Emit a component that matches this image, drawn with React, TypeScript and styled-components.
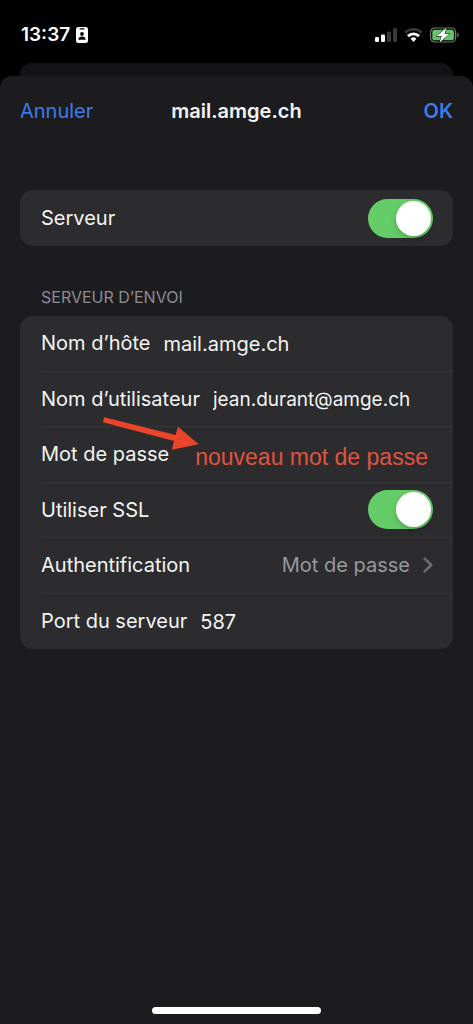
import React, { useState } from "react";
import styled, { createGlobalStyle } from "styled-components";

const GlobalStyle = createGlobalStyle`
  *, *::before, *::after { box-sizing: border-box; }
  body {
    margin: 0;
    background: #000;
    color: #f4f4f5;
    font-family: Inter, "Liberation Sans", sans-serif;
    font-size: 20px;
    line-height: 24px;
  }
  button, input { font: inherit; color: inherit; }
`;

const Screen = styled.div`
  display: flex;
  flex-direction: column;
  min-height: 100vh;
`;

const StatusBar = styled.header`
  display: flex;
  align-items: center;
  justify-content: space-between;
  height: 63px;
  padding: 6px 14px 0 21px;
`;

const StatusGroup = styled.div<{ $gap: number }>`
  display: flex;
  align-items: center;
  gap: ${(p) => p.$gap}px;
`;

const Clock = styled.time`
  font-size: 19px;
  font-weight: 600;
  color: #fff;
`;

const BackSheet = styled.div`
  height: 13px;
  margin: 0 20px;
  border-radius: 12px 12px 0 0;
  background: #131315;
`;

const Sheet = styled.main`
  flex: 1;
  display: flex;
  flex-direction: column;
  padding: 0 20px 10px;
  border-radius: 12px 12px 0 0;
  background: #1c1c1e;
`;

const NavBar = styled.nav`
  display: grid;
  grid-template-columns: 1fr auto 1fr;
  align-items: center;
  height: 70px;
  margin-bottom: 44px;
`;

const Title = styled.h1`
  margin: 0;
  font-size: 20px;
  font-weight: 600;
`;

const NavButton = styled.button<{ $end?: boolean }>`
  justify-self: ${(p) => (p.$end ? "end" : "start")};
  padding: 0;
  border: 0;
  background: none;
  color: #3d7be6;
  font-weight: ${(p) => (p.$end ? 600 : 400)};
`;

const Group = styled.div<{ $height: number }>`
  position: relative;
  display: grid;
  grid-template-columns: minmax(0, 1fr);
  grid-auto-rows: 1fr;
  min-height: ${(p) => p.$height}px;
  padding-left: 21px;
  border-radius: 13px;
  background: #2c2c2e;
`;

const Row = styled.div`
  display: flex;
  align-items: center;
  gap: 13px;
  padding-right: 20px;
  &:not(:last-of-type) { border-bottom: 1px solid #363639; }
`;

const Label = styled.label`
  white-space: nowrap;
`;

const Field = styled.input<{ $small?: boolean }>`
  flex: 1;
  min-width: 0;
  height: 26px;
  padding: 1px 0 0;
  border: 0;
  outline: 0;
  background: none;
  font-size: ${(p) => (p.$small ? 19 : 20)}px;
`;

const NoteField = styled(Field)`
  height: 32px;
  padding: 6px 0 0 13px;
  color: #e0533f;
  font-family: "Liberation Sans", Arial, sans-serif;
  font-size: 23px;
`;

const SectionTitle = styled.h2`
  margin: 41px 0 8px;
  padding-left: 21px;
  color: #8c8c92;
  font-size: 16px;
  font-weight: 400;
  line-height: 21px;
`;

const Switch = styled.input`
  appearance: none;
  flex: none;
  display: flex;
  width: 65px;
  height: 39px;
  margin: 0 0 0 auto;
  padding: 2px;
  border-radius: 20px;
  background: #39393d;
  &:checked { background: #65cd67; justify-content: flex-end; }
  &::before {
    content: "";
    width: 35px;
    height: 35px;
    border-radius: 50%;
    background: #fff;
    box-shadow: 0 3px 6px rgba(0, 0, 0, 0.18);
  }
`;

const Choice = styled.button`
  display: flex;
  flex: 1;
  align-items: center;
  justify-content: flex-end;
  gap: 13px;
  padding: 0;
  border: 0;
  background: none;
  color: #98989f;
`;

const Arrow = styled.svg`
  position: absolute;
  left: 80px;
  top: 99px;
  pointer-events: none;
`;

const HomeIndicator = styled.div`
  width: 169px;
  height: 7px;
  margin: auto auto 0;
  border-radius: 4px;
  background: #fff;
`;

const BadgeIcon = () => (
  <svg width="12" height="16" viewBox="0 0 12 16" aria-hidden="true">
    <rect width="12" height="16" rx="2.5" fill="#fff" />
    <rect x="3.5" y="1.2" width="5" height="1.3" rx=".6" fill="#000" />
    <circle cx="6" cy="6.9" r="1.9" fill="#000" />
    <path d="M2.3 12.8c0-2.1 1.7-3.3 3.7-3.3s3.7 1.2 3.7 3.3z" fill="#000" />
  </svg>
);

const SignalIcon = () => (
  <svg width="22" height="14" viewBox="0 0 22 14" aria-hidden="true">
    <rect x="0" y="9" width="4" height="5" rx="1.2" fill="#fff" />
    <rect x="6" y="6.5" width="4" height="7.5" rx="1.2" fill="#fff" />
    <rect x="12" y="3.5" width="4" height="10.5" rx="1.2" fill="#39393b" />
    <rect x="18" y="0" width="4" height="14" rx="1.2" fill="#39393b" />
  </svg>
);

const WifiIcon = () => (
  <svg width="19" height="14" viewBox="0 0 19 14" aria-hidden="true" fill="none">
    <path d="M1.2 4.7a11.8 11.8 0 0 1 16.6 0" stroke="#39393b" strokeWidth="2.5" />
    <path d="M4 8.1a7.8 7.8 0 0 1 11 0" stroke="#fff" strokeWidth="2.9" />
    <path d="M6.6 10.7a4.2 4.2 0 0 1 5.8 0L9.5 13.9z" fill="#fff" />
  </svg>
);

const BatteryIcon = () => (
  <svg width="29" height="16" viewBox="0 0 29 16" aria-hidden="true">
    <rect x=".6" y="1" width="25" height="14" rx="4.2" fill="none" stroke="#77777a" strokeWidth="1.2" />
    <path d="M27.2 5.7c1.8.6 1.8 4 0 4.6z" fill="#77777a" />
    <rect x="2.3" y="2.7" width="21.6" height="10.6" rx="2.6" fill="#65c466" />
    <path d="M16.6.4 6.7 9.1h4.9l-2 6.5 10-8.9h-5z" fill="#fff" stroke="#000" strokeWidth="1" paintOrder="stroke" strokeLinejoin="round" />
  </svg>
);

const Chevron = () => (
  <svg width="10" height="16" viewBox="0 0 10 16" aria-hidden="true">
    <path d="M1.5 1.5 8.3 8l-6.8 6.5" fill="none" stroke="#6a6a6f" strokeWidth="2.5" strokeLinecap="round" strokeLinejoin="round" />
  </svg>
);

export default function App() {
  const [server, setServer] = useState(true);
  const [ssl, setSsl] = useState(true);

  return (
    <Screen>
      <GlobalStyle />
      <StatusBar>
        <StatusGroup $gap={6}>
          <Clock>13:37</Clock>
          <BadgeIcon />
        </StatusGroup>
        <StatusGroup $gap={7}>
          <SignalIcon />
          <WifiIcon />
          <BatteryIcon />
        </StatusGroup>
      </StatusBar>
      <BackSheet />
      <Sheet>
        <NavBar>
          <NavButton>Annuler</NavButton>
          <Title>mail.amge.ch</Title>
          <NavButton $end>OK</NavButton>
        </NavBar>
        <Group $height={56}>
          <Row>
            <Label htmlFor="server">Serveur</Label>
            <Switch id="server" type="checkbox" role="switch" checked={server} onChange={(e) => setServer(e.target.checked)} />
          </Row>
        </Group>
        <SectionTitle>SERVEUR D’ENVOI</SectionTitle>
        <Group $height={333}>
          <Row>
            <Label htmlFor="host">Nom d’hôte</Label>
            <Field id="host" defaultValue="mail.amge.ch" />
          </Row>
          <Row>
            <Label htmlFor="user">Nom d’utilisateur</Label>
            <Field $small id="user" defaultValue="jean.durant@amge.ch" />
          </Row>
          <Row>
            <Label htmlFor="password">Mot de passe</Label>
            <NoteField id="password" defaultValue="nouveau mot de passe" />
          </Row>
          <Row>
            <Label htmlFor="ssl">Utiliser SSL</Label>
            <Switch id="ssl" type="checkbox" role="switch" checked={ssl} onChange={(e) => setSsl(e.target.checked)} />
          </Row>
          <Row>
            <Label htmlFor="auth">Authentification</Label>
            <Choice id="auth">
              Mot de passe
              <Chevron />
            </Choice>
          </Row>
          <Row>
            <Label htmlFor="port">Port du serveur</Label>
            <Field id="port" inputMode="numeric" defaultValue="587" />
          </Row>
          <Arrow width="100" height="36" viewBox="0 0 100 36" aria-hidden="true">
            <path d="M4.2 2.2 75.6 20 78 11.8 98.7 29.3 71.8 34.8 74 25.9 3 7.2z" fill="#ec4429" />
          </Arrow>
        </Group>
        <HomeIndicator />
      </Sheet>
    </Screen>
  );
}
